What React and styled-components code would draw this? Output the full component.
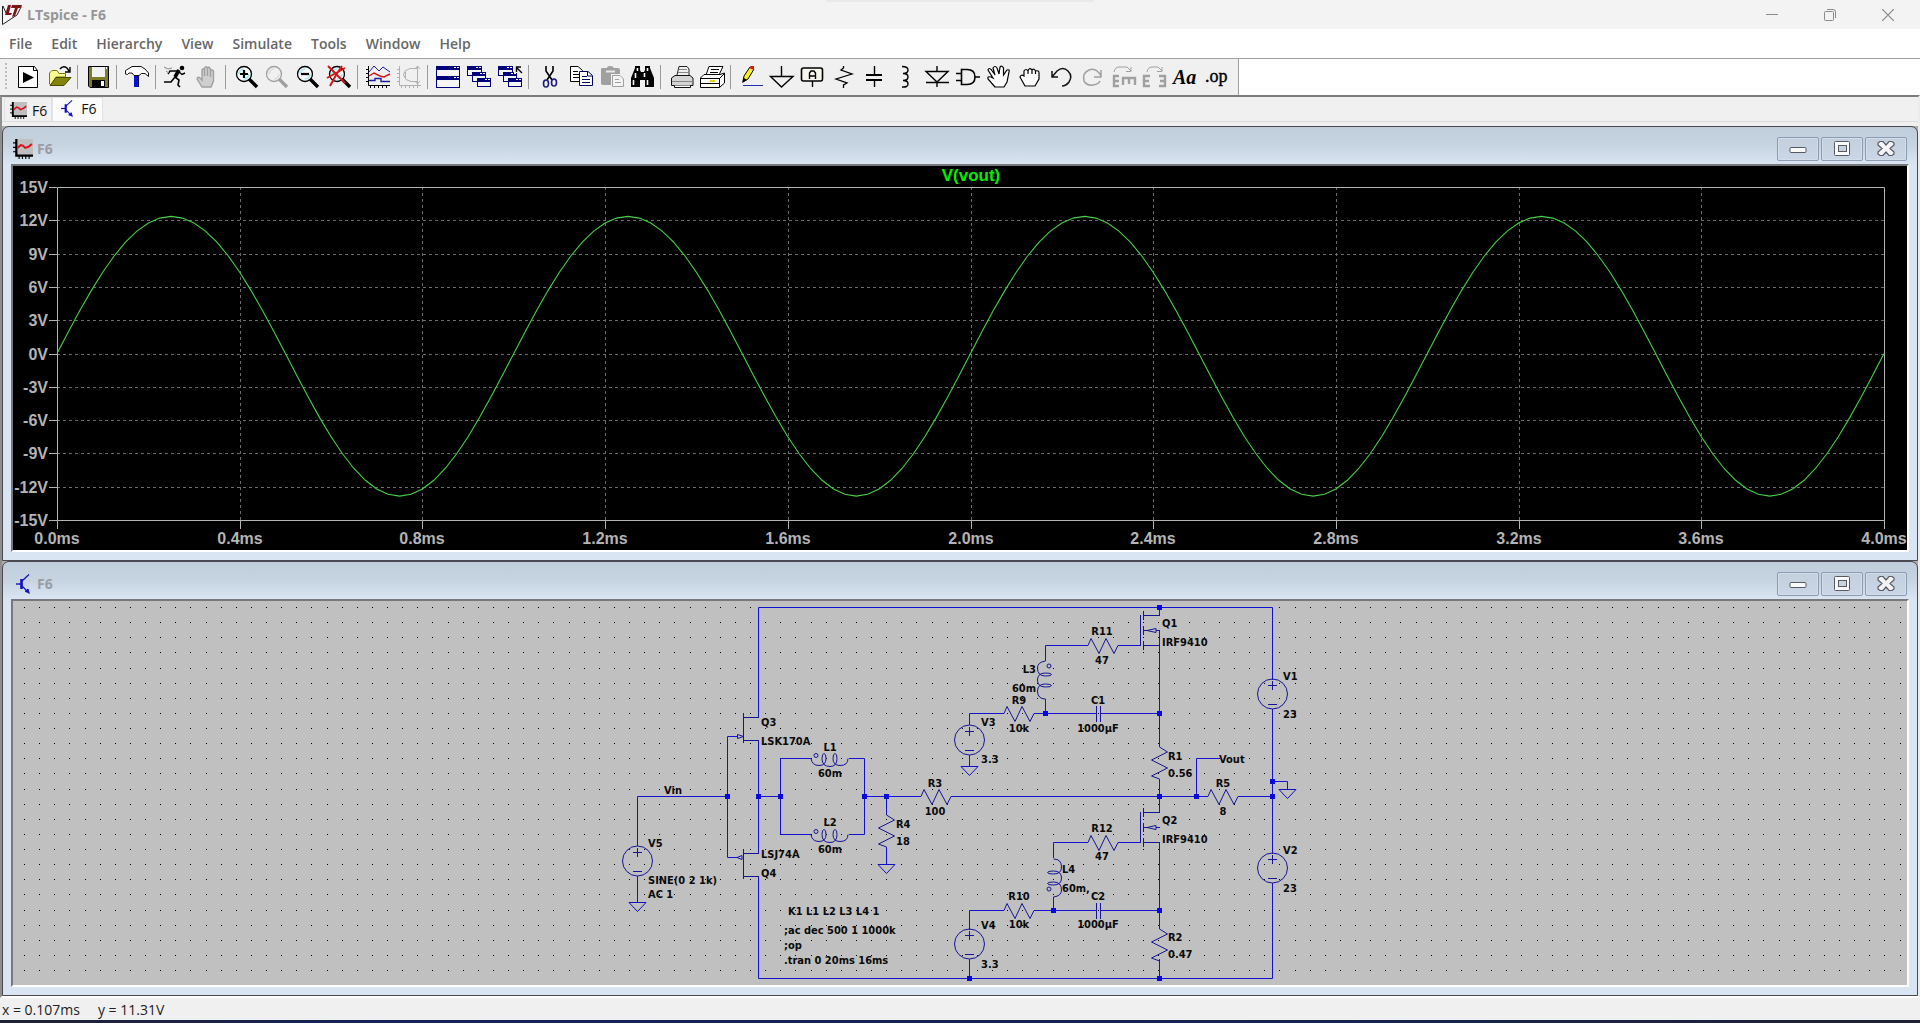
import React, { useLayoutEffect, useRef, useState } from "react";
import styled, { createGlobalStyle, css } from "styled-components";

const ui = '"Open Sans", "Noto Sans", sans-serif';

const Global = createGlobalStyle`
  *, *::before, *::after { box-sizing: border-box; }
  body { margin: 0; background: #f0f0f0; font-family: ${ui}; }
`;

const Page = styled.div`
  display: flex;
  flex-direction: column;
  height: 100vh;
  overflow: hidden;
`;

/* ---------- caption ---------- */

const Caption = styled.header`
  position: relative;
  display: flex;
  align-items: center;
  flex: none;
  height: 29px;
  padding: 0 3px 0 2px;
  background: #f3f3f3;
  &::before {
    content: "";
    position: absolute;
    top: 0;
    left: 43%;
    width: 14%;
    height: 2px;
    background: #e9e9ea;
  }
`;

const AppName = styled.h1`
  flex: 1;
  margin: 0;
  padding-left: 5px;
  font-size: 14px;
  line-height: 20px;
  font-weight: 700;
  color: #969696;
`;

const CaptionButton = styled.button`
  display: flex;
  align-items: center;
  justify-content: center;
  width: 58px;
  height: 29px;
  padding: 0;
  border: 0;
  background: none;
`;

/* ---------- menu ---------- */

const MenuBar = styled.nav`
  display: flex;
  align-items: center;
  flex: none;
  gap: 1px;
  height: 29px;
  background: #fff;
`;

const MenuItem = styled.button`
  padding: 0 9px;
  border: 0;
  background: none;
  font: 600 14px/20px ${ui};
  color: #666;
`;

/* ---------- toolbar ---------- */

const ToolbarRow = styled.div`
  display: flex;
  flex: none;
  border-top: 1px solid #a0a0a0;
  background: #fff;
`;

const Toolbar = styled.div`
  display: flex;
  align-items: center;
  height: 36px;
  padding-right: 7px;
  border-right: 1px solid #a0a0a0;
  background: #f0f0f0;
`;

const Grip = styled.span`
  width: 2px;
  height: 28px;
  margin: 0 5px;
  background: repeating-linear-gradient(#bdbdbd 0 2px, transparent 2px 4px);
`;

const ToolGroup = styled.div`
  display: flex;
  & + &::before {
    content: "";
    width: 1px;
    height: 24px;
    margin: 0 4px 0 3px;
    background: #9a9a9a;
  }
`;

const ToolButton = styled.button`
  display: block;
  width: 31px;
  height: 24px;
  padding: 0;
  border: 0;
  background: none;
  svg { display: block; }
`;

/* ---------- client area ---------- */

const Client = styled.main`
  display: flex;
  flex-direction: column;
  flex: 1;
  min-height: 0;
  border-style: solid;
  border-width: 2px;
  border-color: #7c7c7c #ececec #fff #8f8f8f;
`;

const TabStrip = styled.div`
  display: flex;
  align-items: stretch;
  flex: none;
  height: 25px;
  margin-bottom: 4px;
  padding-left: 2px;
  border-bottom: 1px solid #dcdcdc;
`;

const Tab = styled.button`
  display: flex;
  align-items: center;
  gap: 5px;
  padding: 2px 4px 0 5px;
  border: 1px solid #e2e2e2;
  border-bottom: 0;
  background: #f0f0f0;
  font: 400 14px/20px ${ui};
  color: #111;
  ${(p) => p.$active && css`
    gap: 8px;
    padding: 0 6px 2px 8px;
    background: #fbfbfb;
  `}
`;

const Desktop = styled.div`
  display: flex;
  flex-direction: column;
  flex: 1;
  min-height: 0;
  background: #ababab;
`;

const ChildWindow = styled.section`
  display: flex;
  flex-direction: column;
  flex: 1;
  min-height: 0;
  padding: 0 8px 8px;
  border: 1px solid #4a4a50;
  border-radius: 7px 7px 0 0;
  background: linear-gradient(#c0cddb, #c6d3e0 18px, #d9e5f2 37px);
`;

const WindowTitle = styled.div`
  display: flex;
  align-items: center;
  flex: none;
  gap: 4px;
  height: 37px;
  padding: 7px 2px 0;
`;

const TitleIcon = styled.span`
  display: flex;
  justify-content: center;
  width: 20px;
`;

const TitleText = styled.h2`
  flex: 1;
  margin: 0;
  font-size: 14px;
  line-height: 20px;
  font-weight: 700;
  color: #999da3;
`;

const WindowButtons = styled.div`
  display: flex;
  gap: 2px;
`;

const WindowButton = styled.button`
  display: flex;
  align-items: center;
  justify-content: center;
  width: 42px;
  height: 24px;
  padding: 0;
  border: 1px solid #8a9bb2;
  border-radius: 2px;
  background: linear-gradient(#c3cfdd, #cbd7e6);
  box-shadow: inset 0 0 0 1px #d3deea;
`;

const Pane = styled.div`
  flex: 1;
  min-height: 0;
  border-style: solid;
  border-width: 2px;
  border-color: #77777c #fff #fff #77777c;
  background: ${(p) => p.$bg};
  overflow: hidden;
  svg { display: block; }
`;

const StatusBar = styled.footer`
  flex: none;
  display: flex;
  gap: 18px;
  height: 22px;
  padding-left: 2px;
  background: #f0f0f0;
  font-size: 14px;
  line-height: 24px;
  color: #222;
`;

const TaskbarEdge = styled.div`
  flex: none;
  height: 3px;
  background: linear-gradient(90deg, #1c2230, #16225a 20%, #15224f 70%, #1c2230);
`;

const PlotText = styled.text`
  font: 700 ${(p) => p.$size || 16}px "Liberation Sans", Arial, sans-serif;
  fill: ${(p) => p.$color || "#b4b4b4"};
`;

const NetText = styled.text`
  font: 700 11px "DejaVu Sans Condensed", "DejaVu Sans", sans-serif;
  fill: #0a0a0a;
`;

/* ---------- small drawings ---------- */

const PlotGlyph = ({ size }) => (
  <svg width={size} height={size} viewBox="0 0 18 18" aria-hidden="true">
    <rect x="3" y="0" width="15" height="15" fill="#bfbfbf" />
    <g stroke="#000" fill="none">
      <path d="M3 0V15H18" strokeWidth="2" />
      <path d="M0 3.500H3M0 7.500H3M0 11.500H3M5.500 15V18M8.500 15V18M11.500 15V18M14.500 15V18" />
    </g>
    <path d="M4 8L7 5.500L9 6L11 8L14 7L17 4.500" stroke="#d8141c" strokeWidth="1.800" fill="none" />
  </svg>
);

const TransistorGlyph = ({ width, height }) => (
  <svg width={width} height={height} viewBox="0 0 14 20" fill="none" stroke="#1010c0" aria-hidden="true">
    <path d="M0 10H5" strokeWidth="1.400" />
    <path d="M5.500 5V15" strokeWidth="2.600" />
    <path d="M6 7L13 0.500M6 12L13.500 19.500" strokeWidth="1.200" />
    <path d="M9 17.500L12 15L13 18.500z" fill="#1010c0" />
  </svg>
);

const Logo = () => (
  <svg width="20" height="22" viewBox="0 0 20 22" aria-hidden="true">
    <path d="M0.500 2V20.500L15 11L19 3" fill="#fbfbfb" stroke="#222" strokeWidth="1" />
    <path d="M1 2L4 9" stroke="#222" />
    <path d="M6 1H9L7 9H10L9 11H3z M10 1H20L19 4H16L13 12L10 13L13 4H9z" fill="#7c1418" />
  </svg>
);

const Lens = ({ x = 0, ring = "#000", tint = "#9ce8ee", fill = "#f4fbfb", children }) => (
  <g transform={`translate(${x} 0)`}>
    <circle cx="14" cy="9" r="7.500" fill={fill} stroke={ring} strokeWidth="1.300" />
    <path d="M9 9A5 5 0 0 1 14 4M19 9A5 5 0 0 1 14 14" fill="none" stroke={tint} strokeWidth="1.500" />
    <path d="M19 14L27 22" stroke={ring} strokeWidth="3.400" />
    {children}
  </g>
);

const MiniWindow = ({ x, y, w, h }) => (
  <g>
    <rect x={x + 0.5} y={y + 0.5} width={w - 1} height={h - 1} fill="#f6f6f6" stroke="#00007c" />
    <rect x={x} y={y} width={w} height="4" fill="#00007c" />
    <path d={`M${x + w - 6} ${y + 1.5}h2m1 0h2`} stroke="#fff" />
  </g>
);

const Cascade = () => (
  <>
    <MiniWindow x={4} y={1} w={15} h={10} />
    <MiniWindow x={9} y={7} w={14} h={10} />
    <MiniWindow x={14} y={13} w={14} h={9} />
  </>
);

const line = { fill: "none", stroke: "#000", strokeWidth: 1.4 };
const grey = "#a0a0a0";

const icons = {
  run: (
    <>
      <path d="M6.500 1.500H22.500L25.500 5.500V22.500H6.500z" fill="#fff" stroke="#000" />
      <path d="M21.500 1.500V5.500H25.500" fill="none" stroke="#000" />
      <path d="M11 7V18L22 12.500z" />
    </>
  ),
  open: (
    <>
      <path d="M6.500 19V8L9 5.500H14L16 8.500H22.500V12H13L8 20z" fill="#fafa90" stroke="#77770a" />
      <path d="M7 20.500L13 12.500H28L21 20.500z" fill="#84840a" stroke="#4a4a00" />
      <path d="M17 4Q20 0 24 3L26 6M27 2V7H22" {...line} />
    </>
  ),
  save: (
    <>
      <path d="M6.500 1.500H26.500V22.500H8L6.500 21z" fill="#7e7c28" stroke="#000" />
      <rect x="10" y="2" width="13" height="10" fill="#f2f2f2" />
      <rect x="10" y="15" width="13" height="7" />
      <rect x="19" y="16" width="3" height="5" fill="#fff" />
      <rect x="24" y="2" width="1" height="2" fill="#fff" />
    </>
  ),
  hammer: (
    <>
      <path d="M4.500 9V5.500L8 3.500L11 1.500H20L24 4L27.500 8V11.500L24 8.500H20.500L18 10.500H13L11 8H8L6.500 9.500z" fill="#fff" stroke="#111" />
      <rect x="13" y="11" width="5" height="11" fill="#0a14d0" />
      <path d="M17.500 11V22" stroke="#000060" />
    </>
  ),
  runner: (
    <>
      <circle cx="22" cy="3" r="2.300" />
      <path d="M19 6L10 6L8 9M19 7L22 9.500L25 8" fill="none" stroke="#000" strokeWidth="1.400" />
      <path d="M15 12L19 15L18 20L20 22M15 12L11 17L4 17" fill="none" stroke="#000" strokeWidth="1.600" />
      <path d="M19 5L15 12" stroke="#000" strokeWidth="3.600" />
      <path d="M4 2L8 4L12 3M6 6L9 8" fill="none" stroke="#888" />
    </>
  ),
  stop: (
    <path d="M11 22L6 14Q7 11 9 13L11 15V5Q12 3 13.500 5V11V3Q15 0.500 16.500 3V11V3Q18 1 19.500 4V12V6Q21 4 22.500 6V16L20 22z"
      fill="#cfcfcf" stroke={grey} strokeWidth="1.400" />
  ),
  zoomIn: <Lens><path d="M14 5V13M10 9H18" stroke="#000" strokeWidth="2.200" /></Lens>,
  zoomArea: <Lens x={-1} ring={grey} tint="#dadada" fill="#f0f0f0" />,
  zoomOut: <Lens x={-1}><path d="M10 9H18" stroke="#000" strokeWidth="2.200" /></Lens>,
  zoomFit: (
    <Lens>
      <path d="M5 1L22 18M19 1L13 10L7 21M4 13L13 8L22 3" stroke="#d01818" strokeWidth="2" fill="none" />
    </Lens>
  ),
  plot: (
    <>
      <path d="M6.500 1V20.500H28M4 4.500H6M4 8.500H6M4 12.500H6M4 16.500H6M8.500 20V23M12.500 20V23M16.500 20V23M20.500 20V23M24.500 20V23" {...line} strokeWidth="1" />
      <path d="M7 7L12 1L17 6L21 2L28 7" fill="none" stroke="#1c1ca0" />
      <path d="M7 11L12 8L18 11L22 12L28 9" fill="none" stroke="#d01818" strokeWidth="1.400" />
      <path d="M7 15.500H13V13.500H19V16.500H28" fill="none" stroke="#1c1ca0" strokeWidth="1.400" />
    </>
  ),
  fft: (
    <path d="M6.500 1V20.500H28M4 4.500H6M4 8.500H6M4 12.500H6M4 16.500H6M8.500 20V23M12.500 20V23M16.500 20V23M20.500 20V23M24.500 20V23M10.500 10L12 6L17 3.500H24M10.500 10L13 14.500L18 16.500H24M24.500 1V20M22 4L24.500 1L27 4M22 16L24.500 19L27 16M12.500 7V13"
      fill="none" stroke="#b0b0b0" />
  ),
  tile: (
    <>
      <MiniWindow x={4} y={1} w={24} h={11} />
      <MiniWindow x={4} y={11} w={24} h={12} />
    </>
  ),
  cascade: <Cascade />,
  closeAll: (
    <>
      <Cascade />
      <rect x="20" y="0" width="8" height="8" fill="#f0f0f0" />
      <path d="M28 8L22.500 2.500M22.500 7V2H27" {...line} />
    </>
  ),
  cut: (
    <>
      <path d="M13 1V6L19 15M20 1V6L14 15" {...line} strokeWidth="1.600" />
      <ellipse cx="13" cy="18.500" rx="2.500" ry="3.500" fill="none" stroke="#1c1c7c" strokeWidth="1.600" />
      <ellipse cx="21" cy="17.500" rx="2.500" ry="3.500" fill="none" stroke="#1c1c7c" strokeWidth="1.600" />
    </>
  ),
  copy: (
    <>
      <path d="M6.500 1.500H14L18.500 5.500V16.500H6.500z" fill="#fff" stroke="#000" />
      <path d="M9 6.500H14M9 9.500H15M9 12.500H15" stroke="#000" />
      <path d="M15.500 6.500H24L28.500 10.500V20.500H15.500z" fill="#fff" stroke="#00005c" />
      <path d="M18 11.500H23M18 14.500H26M18 17.500H26M23.500 7V11H28" stroke="#00005c" fill="none" />
    </>
  ),
  paste: (
    <>
      <path d="M6 4Q6 3 8 3H12Q12 1 15 1T19 3H23Q25 3 25 5V9H16V20H8Q6 20 6 18z" fill={grey} />
      <path d="M11 6.500H20" stroke="#e8e8e8" strokeWidth="2" />
      <path d="M17.500 10.500H25L28.500 14V21.500H17.500z" fill="#f4f4f4" stroke={grey} />
      <path d="M20 14.500H24M20 17.500H26" stroke={grey} />
    </>
  ),
  find: (
    <>
      <path d="M9 3V1H14V5L15 7H18L19 5V1H24V3L28 13V22H19V15H14V22H5V13z" />
      <path d="M11.500 3V6M21.500 3V6M9.500 8V13M18.500 8V12M7.500 15V20M21.500 15V20" stroke="#fff" strokeWidth="1.600" />
    </>
  ),
  print: (
    <>
      <path d="M11.500 12L14 1.500H22L24 4V12" fill="#eee" stroke="#222" />
      <path d="M6.500 13L10 10.500H25L28 13V20.500H6.500z" fill="#d4d4d4" stroke="#111" />
      <path d="M7 16.500H28M14 4.500H22M13 7.500H23" stroke="#888" />
      <path d="M9.500 20.500V22.500H25.500V20.500" fill="#fff" stroke="#111" />
    </>
  ),
  printSetup: (
    <>
      <path d="M10 10L13 1.500H27L22 12" fill="#fff" stroke="#000" />
      <path d="M15 4.500H23M14 7.500H22" stroke="#000" />
      <path d="M4.500 13L8 9.500H24L28.500 8V18L23.500 22.500H4.500z" fill="#fff" stroke="#000" />
      <path d="M4.500 13.500H23.500L28 9M23.500 13V22M5 18.500H23" fill="none" stroke="#000" />
      <path d="M14 16H19" stroke="#e0d020" strokeWidth="2" />
    </>
  ),
  wire: (
    <>
      <path d="M8 16L9 11L15 2L19 4L13 14L8 17z" fill="#f8f020" stroke="#000" />
      <path d="M14 3L16 1H19L19 5z" fill="#d01818" />
      <path d="M7 18L9 13L12 15z" />
      <path d="M8 20.500H28" stroke="#2030b0" />
    </>
  ),
  ground: <path d="M15.500 1V11M4.500 11.500H27L15.500 22z" {...line} />,
  label: (
    <>
      <rect x="4.500" y="3" width="21" height="13" rx="2" fill="#f6f6ee" stroke="#000" strokeWidth="1.600" />
      <path d="M15.500 16V22M12.500 14V8L14 6H17L18.500 8V14M12.500 11H18.500" {...line} />
    </>
  ),
  resistor: <path d="M15.500 1V3L13 5L24 9L8 14L19 18L15.500 20V23" {...line} strokeWidth="1.300" />,
  capacitor: (
    <>
      <path d="M15.500 1V9M15.500 16V22" {...line} />
      <path d="M7 10H23M7 15H23" stroke="#000" strokeWidth="2.200" />
    </>
  ),
  inductor: <path d="M12 1.500Q18 1.500 18 5T13 8.500Q18 8.500 18 12T13 15.500Q18 15.500 18 19T12 22" {...line} />,
  diode: <path d="M16 1V6M5 6.500H27L16 17zM5 17.500H28M16 17V22" {...line} />,
  gate: <path d="M9.500 4.500H15Q23 4.500 23 12T15 19.500H9.500zM4 8.500H9M4 15.500H9M23 12H28" {...line} strokeWidth="1.600" />,
  move: (
    <path d="M12 22L5 14Q4 11 8 12L10 13L5 5Q6 2 8.500 5L12 10L10 3Q12 0 14 3L16 9L17 2Q19 0 20.500 3V10L24 5Q27 4 26 7L24 17L21 22z"
      fill="#fff" stroke="#000" strokeWidth="1.200" />
  ),
  drag: (
    <path d="M11 21L6 12Q7 9 10 11V6Q12 3 14 6Q15 2 18 5Q20 3 21.500 6Q25 5 25 8V14L21 21z M14 6V9M18 5V9M21.500 6V9"
      fill="#fff" stroke="#000" strokeWidth="1.200" />
  ),
  undo: <path d="M7 6V12H13M7 12L12 6Q18 1 23 6T24 17Q21 21 17 21" fill="none" stroke="#111" strokeWidth="1.500" />,
  redo: <path d="M25 5V12H18M25 11Q20 2 13 5T8 16Q11 21 17 20T24 16" fill="none" stroke={grey} strokeWidth="1.500" />,
  mirror: (
    <>
      <path d="M7 7Q8 2 12 2H20L24 6M24 2V6.500H19" fill="none" stroke={grey} />
      <path d="M12 11H7V21H12M7 16H12M16 20V13H28V20M22 13V19" fill="none" stroke={grey} strokeWidth="2.400" />
    </>
  ),
  rotate: (
    <>
      <path d="M9 7Q10 2 14 2H20L24 6M24 2V6.500H19" fill="none" stroke={grey} />
      <path d="M12 11H6V21H12M6 16H11M21 11H27V21H21M27 16H22" fill="none" stroke={grey} strokeWidth="2.400" />
    </>
  ),
  text: <text x="4" y="19" style={{ font: 'italic 700 20px "Liberation Serif", serif' }}>Aa</text>,
  op: <text x="5" y="17" style={{ font: '400 18px "Liberation Serif", serif' }} stroke="#000" strokeWidth="0.400">.op</text>,
};

const toolGroups = [
  ["run", "open"],
  ["save"],
  ["hammer"],
  ["runner", "stop"],
  ["zoomIn", "zoomArea", "zoomOut", "zoomFit"],
  ["plot", "fft"],
  ["tile", "cascade", "closeAll"],
  ["cut", "copy", "paste", "find"],
  ["print", "printSetup"],
  ["wire", "ground", "label", "resistor", "capacitor", "inductor", "diode", "gate",
    "move", "drag", "undo", "redo", "mirror", "rotate", "text", "op"],
];

/* ---------- waveform ---------- */

function useSize() {
  const ref = useRef(null);
  const [size, setSize] = useState({ w: 0, h: 0 });
  useLayoutEffect(() => {
    const read = () => setSize({ w: ref.current.clientWidth, h: ref.current.clientHeight });
    read();
    const observer = new ResizeObserver(read);
    observer.observe(ref.current);
    return () => observer.disconnect();
  }, []);
  return [ref, size];
}

const margin = { left: 44, right: 23, top: 21, bottom: 30 };

function Waveform() {
  const [ref, { w, h }] = useSize();
  const right = w - margin.right;
  const bottom = h - margin.bottom;
  const xAt = (ms) => margin.left + ((right - margin.left) * ms) / 4;
  const yAt = (v) => margin.top + ((bottom - margin.top) * (15 - v)) / 30;
  const px = (n) => Math.round(n) + 0.5;
  const volts = [15, 12, 9, 6, 3, 0, -3, -6, -9, -12, -15];
  const times = Array.from({ length: 11 }, (_, i) => i * 0.4);
  const trace = Array.from({ length: 161 }, (_, i) => {
    const t = i / 40;
    const s = Math.sin(2 * Math.PI * t);
    return `${xAt(t).toFixed(1)},${yAt(12.6 * s - 0.25 * s * s).toFixed(1)}`;
  }).join(" ");
  return (
    <Pane $bg="#000" ref={ref}>
      {w > 0 && (
        <svg width={w} height={h} role="img" aria-label="V(vout) over time">
          <g stroke="#6c6c6c" strokeDasharray="3 3" fill="none">
            {volts.slice(1, -1).map((v) => <path key={v} d={`M${margin.left} ${px(yAt(v))}H${right}`} />)}
            {times.slice(1, -1).map((t) => <path key={t} d={`M${px(xAt(t))} ${margin.top}V${bottom}`} />)}
          </g>
          <g stroke="#b4b4b4" fill="none">
            <path d={`M${px(margin.left)} ${px(margin.top)}H${px(right)}V${px(bottom)}H${px(margin.left)}z`} />
            {volts.map((v) => <path key={v} d={`M${margin.left - 8} ${px(yAt(v))}h8`} />)}
            {times.map((t) => <path key={t} d={`M${px(xAt(t))} ${bottom}v9`} />)}
          </g>
          <polyline points={trace} fill="none" stroke="#48d048" strokeWidth="1.100" />
          {volts.map((v) => (
            <PlotText key={v} x={margin.left - 9} y={Math.round(yAt(v)) + 6} textAnchor="end">{v}V</PlotText>
          ))}
          {times.map((t) => (
            <PlotText key={t} x={Math.round(xAt(t))} y={bottom + 24} textAnchor="middle">{t.toFixed(1)}ms</PlotText>
          ))}
          <PlotText $size={17} $color="#00f000" x={Math.round((margin.left + right) / 2)} y="15" textAnchor="middle">V(vout)</PlotText>
        </svg>
      )}
    </Pane>
  );
}

/* ---------- schematic ---------- */

const steps = [0, 15, 30, 45, 61, 76, 91, 106];
const gridDots = steps.flatMap((x) => steps.map((y) => `M${x} ${y}h1v1h-1z`)).join("");

const wires = [
  "M745.500 116.500V6.500H1259.500V79M745.500 140V252M745.500 276V377.500H1259.500V282",
  "M724 135.500H714.500V256.500H724M624.500 245V195.500H714.500",
  "M745.500 195.500H767.500M798 157.500H767.500V233.500H798M836 157.500H851.500V233.500H836M851.500 195.500H908",
  "M873.500 195V214M873.500 246V264M624.500 275V302M938 195.500H1195M1225 195.500H1259.500",
  "M1146.500 6V14M1146.500 30V146M1146.500 178V211M1183.500 195V157.500H1206",
  "M1127 44.500H1105M1075 44.500H1032.500V60M1032.500 98V112.500H1083M1088 112.500H1146.500M1032 112.500H1021M991 112.500H956.500V124M956.500 154V165",
  "M1259.500 108V253M1259.500 180.500H1274.500V188",
  "M1127 241.500H1105M1075 241.500H1040.500V257M1040.500 296V309.500H1083M1088 309.500H1146.500M1040 309.500H1021M991 309.500H956.500V329M956.500 358V377",
  "M1146.500 242V328M1146.500 358V377",
];

const nodes = [
  [714, 195], [745, 195], [767, 195], [851, 195], [873, 195], [1146, 6], [1146, 112], [1032, 112],
  [1146, 195], [1183, 195], [1259, 180], [1259, 195], [1040, 309], [1146, 309], [956, 377], [1146, 377],
];

const ResistorH = ({ x, y }) => (
  <path d={`M${x} ${y}l3 -7l8 15l7 -15l8 15l4 -8`} />
);
const ResistorV = ({ x, y }) => (
  <path d={`M${x} ${y}l8 5l-16 8l16 8l-16 8l8 3`} />
);
const Source = ({ x, y }) => (
  <g>
    <circle cx={x + 0.5} cy={y} r="15" />
    <path d={`M${x - 4} ${y - 8.5}h9M${x + 0.5} ${y - 13}v9M${x - 4} ${y + 10.5}h9`} />
  </g>
);
const Ground = ({ x, y }) => <path d={`M${x - 8.5} ${y}h17l-8.500 9z`} stroke="#1010c0" />;
const CoilH = ({ x, y }) => (
  <g>
    <path d={`M${x} ${y}q1 7 8 7q7 0 7 -7q0 -5 -2 -5t-2 5q0 8 8 8q7 0 7 -8q0 -5 -2 -5t-2 5q0 7 7 7q8 0 8 -7`} />
    <circle cx={x + 5} cy={y - 3} r="2" />
  </g>
);
const CoilV = ({ x, y, flip }) => (
  <g transform={`translate(${x} ${y}) scale(${flip ? -1 : 1})`}>
    <path d="M0 0q-8 1 -8 7q0 8 8 8q6 0 6 -1.500t-6 -1.500q-8 0 -8 7q0 7 8 7q6 0 6 -1.500t-6 -1.500q-8 0 -8 7q0 8 8 8" />
  </g>
);
const Mosfet = ({ y }) => (
  <g>
    <path d={`M1127.500 ${y}v31M1130.500 ${y - 4}v9M1130.500 ${y + 11}v9M1130.500 ${y + 26}v9`} />
    <path d={`M1131 ${y + 0.5}h16M1131 ${y + 15.5}h3l9 -2v4l-9 -2M1143 ${y + 15.5}h4M1131 ${y + 30.5}h16`} />
  </g>
);
const Capacitor = ({ y }) => <path d={`M1083.500 ${y}v16M1087.500 ${y}v16`} />;

const labels = [
  [748, 125, "Q3"], [748, 144, "LSK170A"], [817, 150, "L1", "middle"], [817, 176, "60m", "middle"],
  [660, 193, "Vin", "middle"], [922, 186, "R3", "middle"], [922, 214, "100", "middle"],
  [817, 225, "L2", "middle"], [817, 252, "60m", "middle"], [883, 227, "R4"], [883, 244, "18"],
  [635, 246, "V5"], [635, 283, "SINE(0 2 1k)"], [635, 297, "AC 1"], [748, 257, "LSJ74A"], [748, 276, "Q4"],
  [775, 314, "K1 L1 L2 L3 L4 1"], [771, 333, ";ac dec 500 1 1000k"], [771, 348, ";op"], [771, 363, ".tran 0 20ms 16ms"],
  [1149, 26, "Q1"], [1149, 45, "IRF9410"], [1089, 34, "R11", "middle"], [1089, 63, "47", "middle"],
  [1023, 72, "L3", "end"], [1023, 91, "60m", "end"], [1006, 103, "R9", "middle"], [1006, 131, "10k", "middle"],
  [968, 125, "V3"], [968, 162, "3.3"], [1085, 103, "C1", "middle"], [1085, 131, "1000µF", "middle"],
  [1155, 159, "R1"], [1155, 176, "0.56"], [1206, 162, "Vout"], [1210, 186, "R5", "middle"], [1210, 214, "8", "middle"],
  [1270, 79, "V1"], [1270, 117, "23"], [1270, 253, "V2"], [1270, 291, "23"],
  [1149, 223, "Q2"], [1149, 242, "IRF9410"], [1089, 231, "R12", "middle"], [1089, 259, "47", "middle"],
  [1049, 272, "L4"], [1049, 291, "60m,"], [1006, 299, "R10", "middle"], [1006, 327, "10k", "middle"],
  [968, 328, "V4"], [968, 367, "3.3"], [1085, 299, "C2", "middle"], [1085, 327, "1000µF", "middle"],
  [1155, 340, "R2"], [1155, 357, "0.47"],
];

function Schematic() {
  return (
    <Pane $bg="#c0c0c0">
      <svg width="100%" height="100%" role="img" aria-label="Amplifier schematic">
        <defs>
          <pattern id="grid" x="11" y="6" width="121" height="121" patternUnits="userSpaceOnUse">
            <path d={gridDots} fill="#000" shapeRendering="crispEdges" />
          </pattern>
        </defs>
        <rect width="100%" height="372" fill="url(#grid)" />
        <g fill="none" stroke="#1212d0">
          {wires.map((d) => <path key={d} d={d} />)}
        </g>
        <g fill="none" stroke="#141494">
          <path d="M730.500 112V142M730.500 116.500H746M730.500 139.500H746M724.500 133.500v4l6 -2l-6 -2" />
          <path d="M730.500 248V278M730.500 252.500H746M730.500 275.500H746M724 256.500l5 -2v4l-5 -2" />
          <CoilH x={798} y={157.5} />
          <CoilH x={798} y={233.5} />
          <ResistorH x={908} y={195.5} />
          <ResistorH x={1195} y={195.5} />
          <ResistorH x={1075} y={44.5} />
          <ResistorH x={991} y={112.5} />
          <ResistorH x={1075} y={241.5} />
          <ResistorH x={991} y={309.5} />
          <ResistorV x={873.5} y={214} />
          <ResistorV x={1146.5} y={146} />
          <ResistorV x={1146.5} y={328} />
          <Source x={624} y={260} />
          <Source x={956} y={139} />
          <Source x={956} y={343} />
          <Source x={1259} y={93} />
          <Source x={1259} y={267} />
          <Ground x={624.5} y={301.5} />
          <Ground x={873.5} y={263.5} />
          <Ground x={956.5} y={165.5} />
          <Ground x={1274.5} y={188.5} />
          <CoilV x={1032.5} y={60} />
          <CoilV x={1040.5} y={296} flip />
          <circle cx="1036" cy="65" r="2" />
          <circle cx="1036" cy="288" r="2" />
          <Mosfet y={14} />
          <Mosfet y={211} />
          <Capacitor y={105} />
          <Capacitor y={302} />
        </g>
        <g fill="#0808dc">
          {nodes.map(([x, y]) => <rect key={`${x}-${y}`} x={x - 2} y={y - 2} width="5" height="5" />)}
        </g>
        {labels.map(([x, y, text, anchor]) => (
          <NetText key={`${x}-${y}`} x={x} y={y} textAnchor={anchor}>{text}</NetText>
        ))}
      </svg>
    </Pane>
  );
}

/* ---------- windows ---------- */

function Child({ icon, title, children }) {
  return (
    <ChildWindow>
      <WindowTitle>
        <TitleIcon>{icon}</TitleIcon>
        <TitleText>{title}</TitleText>
        <WindowButtons>
          <WindowButton aria-label="Minimize">
            <svg width="18" height="18" viewBox="0 0 18 18">
              <rect x="1" y="7.500" width="16" height="5" rx="1" fill="#fafafa" stroke="#555a64" />
            </svg>
          </WindowButton>
          <WindowButton aria-label="Maximize">
            <svg width="18" height="18" viewBox="0 0 18 18">
              <rect x="1.500" y="1.500" width="15" height="14" rx="1" fill="#fafafa" stroke="#555a64" />
              <rect x="5.500" y="5.500" width="8" height="6" fill="#c8d3e0" stroke="#555a64" />
            </svg>
          </WindowButton>
          <WindowButton aria-label="Close">
            <svg width="18" height="18" viewBox="0 0 18 18">
              <path d="M1 3L3 1.500H6L9 5L12 1.500H15L17 3V5L13 8.500L17 12V14L15 15.500H12L9 12L6 15.500H3L1 14V12L5 8.500L1 5z" fill="#f4f4f6" stroke="#555a64" strokeWidth="1.200" />
            </svg>
          </WindowButton>
        </WindowButtons>
      </WindowTitle>
      {children}
    </ChildWindow>
  );
}

export default function App() {
  return (
    <Page>
      <Global />
      <Caption>
        <Logo />
        <AppName>LTspice - F6</AppName>
        <CaptionButton aria-label="Minimize">
          <svg width="12" height="12"><path d="M0 5.500H12" stroke="#8a8a8a" /></svg>
        </CaptionButton>
        <CaptionButton aria-label="Restore">
          <svg width="12" height="12" fill="none" stroke="#8a8a8a">
            <rect x="0.500" y="2.500" width="9" height="9" rx="1" />
            <path d="M3 0.500H9Q11.500 0.500 11.500 3V9" />
          </svg>
        </CaptionButton>
        <CaptionButton aria-label="Close">
          <svg width="12" height="12"><path d="M0 0L12 12M12 0L0 12" stroke="#8a8a8a" strokeWidth="1.200" /></svg>
        </CaptionButton>
      </Caption>
      <MenuBar>
        {["File", "Edit", "Hierarchy", "View", "Simulate", "Tools", "Window", "Help"].map((m) => (
          <MenuItem key={m}>{m}</MenuItem>
        ))}
      </MenuBar>
      <ToolbarRow>
        <Toolbar role="toolbar">
          <Grip />
          {toolGroups.map((group) => (
            <ToolGroup key={group[0]}>
              {group.map((name) => (
                <ToolButton key={name} aria-label={name}>
                  <svg width="31" height="24" viewBox="0 0 31 24">{icons[name]}</svg>
                </ToolButton>
              ))}
            </ToolGroup>
          ))}
        </Toolbar>
      </ToolbarRow>
      <Client>
        <TabStrip role="tablist">
          <Tab role="tab" aria-selected="false"><PlotGlyph size={17} />F6</Tab>
          <Tab role="tab" aria-selected="true" $active><TransistorGlyph width={12} height={17} />F6</Tab>
        </TabStrip>
        <Desktop>
          <Child icon={<PlotGlyph size={20} />} title="F6"><Waveform /></Child>
          <Child icon={<TransistorGlyph width={14} height={20} />} title="F6"><Schematic /></Child>
        </Desktop>
      </Client>
      <StatusBar>
        <span>x = 0.107ms</span>
        <span>y = 11.31V</span>
      </StatusBar>
      <TaskbarEdge />
    </Page>
  );
}
